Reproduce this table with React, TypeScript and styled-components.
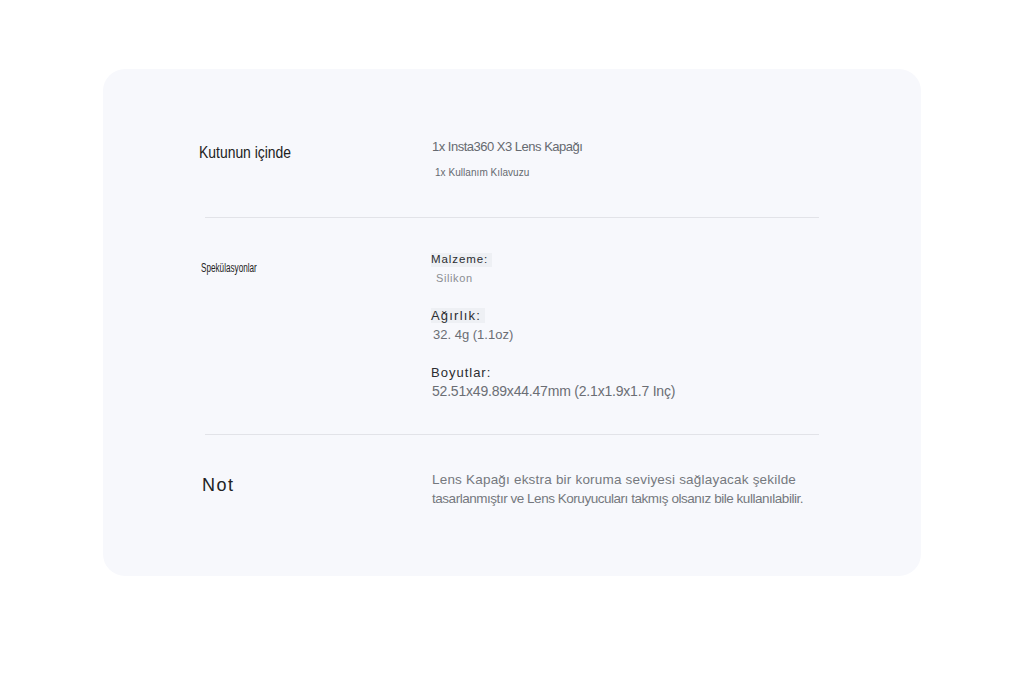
import React from 'react'
import styled, { createGlobalStyle, css } from 'styled-components'

const GlobalStyle = createGlobalStyle`
  html, body {
    margin: 0;
    padding: 0;
    background: #ffffff;
    font-family: "Liberation Sans", Arial, sans-serif;
  }
`

const Page = styled.div`
  width: 1024px;
  min-height: 678px;
  padding-top: 69px;
  box-sizing: border-box;
`

const Card = styled.div`
  margin-left: 103px;
  width: 818px;
  height: 507px;
  box-sizing: border-box;
  padding: 0 102px;
  background-color: #f7f8fc;
  border-radius: 22px;
  display: flex;
  flex-direction: column;
`

const Row = styled.section<{ $top: number; $height: number; $divider?: boolean }>`
  display: grid;
  grid-template-columns: 227px 1fr;
  align-items: start;
  height: ${(p) => p.$height}px;
  padding-top: ${(p) => p.$top}px;
  box-sizing: border-box;
  ${(p) =>
    p.$divider &&
    css`
      border-bottom: 1px solid #e2e3e8;
    `}
`

const Label = styled.div<{ $size: number; $shift: number; $top: number; $squeeze?: number; $spacing?: number }>`
  margin-left: ${(p) => p.$shift}px;
  margin-top: ${(p) => p.$top}px;
  font-size: ${(p) => p.$size}px;
  line-height: ${(p) => p.$size + 4}px;
  letter-spacing: ${(p) => p.$spacing ?? 0}px;
  color: #222;
  white-space: nowrap;
  transform-origin: left center;
  transform: scaleX(${(p) => p.$squeeze ?? 1});
`

const Column = styled.div`
  display: flex;
  flex-direction: column;
  align-items: flex-start;
`

const BoxItem = styled.div<{ $size: number; $indent?: number; $top?: number; $spacing?: number }>`
  font-size: ${(p) => p.$size}px;
  line-height: ${(p) => p.$size + 3}px;
  letter-spacing: ${(p) => p.$spacing ?? 0}px;
  color: #666a70;
  padding-left: ${(p) => p.$indent ?? 0}px;
  margin-top: ${(p) => p.$top ?? 0}px;
  white-space: nowrap;
`

const SpecGroup = styled.div<{ $top?: number }>`
  display: flex;
  flex-direction: column;
  align-items: flex-start;
  margin-top: ${(p) => p.$top ?? 0}px;
`

const SpecTitle = styled.span<{ $size: number; $spacing: number; $shaded?: boolean }>`
  display: inline-block;
  font-size: ${(p) => p.$size}px;
  line-height: ${(p) => p.$size + 2}px;
  letter-spacing: ${(p) => p.$spacing}px;
  color: #2b2d31;
  padding: 0 4px 0 0;
  margin-left: -1px;
  background-color: ${(p) => (p.$shaded ? '#eef0f4' : 'transparent')};
`

const SpecValue = styled.span<{ $size: number; $indent?: number; $top: number; $spacing?: number; $light?: boolean }>`
  font-size: ${(p) => p.$size}px;
  line-height: ${(p) => p.$size + 3}px;
  letter-spacing: ${(p) => p.$spacing ?? 0}px;
  color: ${(p) => (p.$light ? '#8a8d93' : '#6b6e74')};
  padding-left: ${(p) => p.$indent ?? 0}px;
  margin-top: ${(p) => p.$top}px;
  white-space: nowrap;
`

const Note = styled.p`
  margin: 0;
  font-size: 13.5px;
  line-height: 19px;
  color: #75787e;
`

const NoteLine = styled.span<{ $spacing?: number }>`
  display: block;
  white-space: nowrap;
  letter-spacing: ${(p) => p.$spacing ?? 0}px;
`

export default function App() {
  return (
    <Page>
      <GlobalStyle />
      <Card>
        <Row $top={70} $height={149} $divider>
          <Label $size={16} $shift={-6} $top={4} $squeeze={0.87}>
            Kutunun içinde
          </Label>
          <Column>
            <BoxItem $size={13} $spacing={-0.5}>1x Insta360 X3 Lens Kapağı</BoxItem>
            <BoxItem $size={10} $indent={3} $top={11} $spacing={0.05}>1x Kullanım Kılavuzu</BoxItem>
          </Column>
        </Row>
        <Row $top={35} $height={217} $divider>
          <Label $size={12} $shift={-4} $top={7} $squeeze={0.68}>
            Spekülasyonlar
          </Label>
          <Column>
            <SpecGroup>
              <SpecTitle $size={11.5} $spacing={0.9} $shaded>Malzeme:</SpecTitle>
              <SpecValue $size={11} $indent={4} $top={4} $spacing={0.6} $light>Silikon</SpecValue>
            </SpecGroup>
            <SpecGroup $top={23}>
              <SpecTitle $size={13} $spacing={1.2} $shaded>Ağırlık:</SpecTitle>
              <SpecValue $size={13} $indent={1} $top={4}>32. 4g (1.1oz)</SpecValue>
            </SpecGroup>
            <SpecGroup $top={22}>
              <SpecTitle $size={13} $spacing={1}>Boyutlar:</SpecTitle>
              <SpecValue $size={14} $top={3} $spacing={-0.2}>52.51x49.89x44.47mm (2.1x1.9x1.7 Inç)</SpecValue>
            </SpecGroup>
          </Column>
        </Row>
        <Row $top={35} $height={141}>
          <Label $size={18} $shift={-3} $top={4} $spacing={1.5}>
            Not
          </Label>
          <Note>
            <NoteLine $spacing={0.2}>Lens Kapağı ekstra bir koruma seviyesi sağlayacak şekilde</NoteLine>
            <NoteLine $spacing={-0.47}>tasarlanmıştır ve Lens Koruyucuları takmış olsanız bile kullanılabilir.</NoteLine>
          </Note>
        </Row>
      </Card>
    </Page>
  )
}
